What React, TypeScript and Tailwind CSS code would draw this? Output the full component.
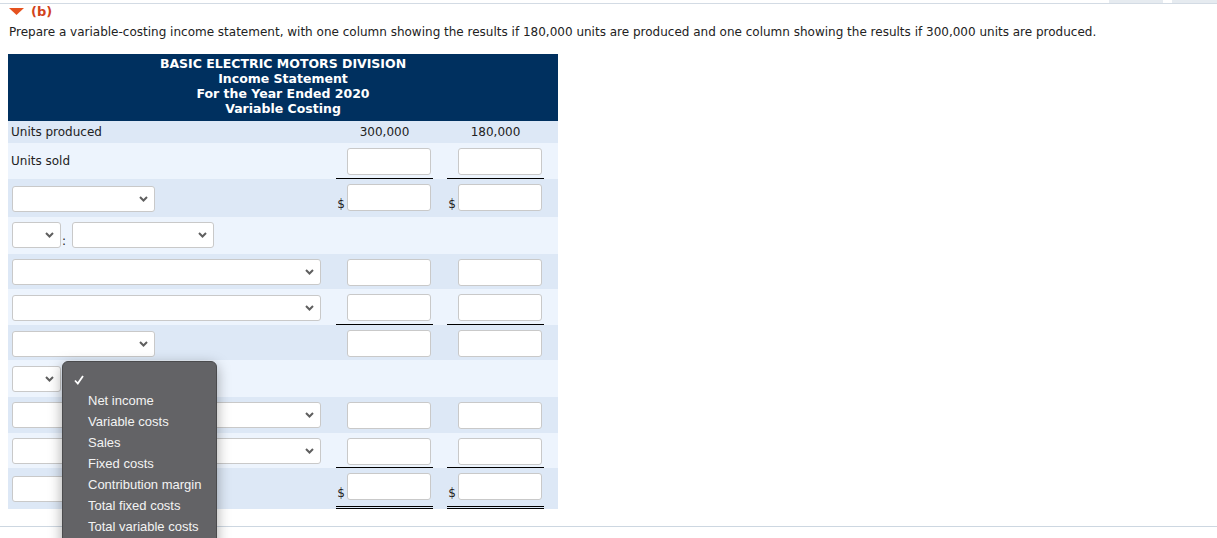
import type { ReactNode } from "react";

const DARK = "bg-[#dde8f6]";
const LIGHT = "bg-[#edf4fd]";

function Chevron() {
  return (
    <svg width="9" height="6" viewBox="0 0 9 6" className="shrink-0">
      <path d="M1 1 L4.5 4.5 L8 1" fill="none" stroke="#5f5f5f" strokeWidth="2" />
    </svg>
  );
}

function Select({ w }: { w: string }) {
  return (
    <div
      className={`${w} h-[26px] bg-white border border-[#c9c9c9] rounded-[3px] flex items-center justify-end pr-[6px]`}
    >
      <Chevron />
    </div>
  );
}

function Amount({ dollar, line }: { dollar?: boolean; line?: "single" | "double" }) {
  const border =
    line === "single"
      ? "border-b border-black"
      : line === "double"
      ? "border-b-[3px] border-double border-black"
      : "";
  return (
    <div className={`h-full flex justify-end items-start pt-[5px] pr-[2px] ${border}`}>
      <div className="flex items-end">
        {dollar && <span className="text-[12px] leading-[14px] mr-[2px] text-[#222]">$</span>}
        <div className="w-[84px] h-[27px] bg-white border border-[#c9c9c9] rounded-[3px]" />
      </div>
    </div>
  );
}

function Row({
  h,
  tone,
  label,
  a,
  b,
}: {
  h: string;
  tone: string;
  label: ReactNode;
  a?: ReactNode;
  b?: ReactNode;
}) {
  return (
    <div className={`grid grid-cols-[328px_97px_14px_97px_14px] ${h} ${tone}`}>
      <div className="pl-[4px] pt-[5px]">{label}</div>
      <div>{a}</div>
      <div />
      <div>{b}</div>
      <div />
    </div>
  );
}

function PairSelects() {
  return (
    <div className="flex items-end">
      <Select w="w-[49px]" />
      <span className="w-[11px] pl-[1px] leading-[14px]">:</span>
      <Select w="w-[142px]" />
    </div>
  );
}

const options = [
  "Net income",
  "Variable costs",
  "Sales",
  "Fixed costs",
  "Contribution margin",
  "Total fixed costs",
  "Total variable costs",
];

export default function App() {
  return (
    <div
      className="relative w-[1217px] h-[538px] overflow-hidden bg-white text-[#222]"
      style={{ fontFamily: '"DejaVu Sans", Verdana, sans-serif' }}
    >
      {/* top tab strip */}
      <div className="relative h-[4px] border-b border-[#d3dbe4]">
        <div className="absolute left-[1109px] top-0 w-[54px] h-[3px] bg-[#e6ebf0]" />
        <div className="absolute left-[1172px] top-0 w-[45px] h-[3px] bg-[#e6ebf0]" />
      </div>

      <div className="flex items-center gap-[7px] pl-[9px] pt-[1px] h-[14px]">
        <svg width="15" height="7" viewBox="0 0 15 7">
          <path d="M0 0 H15 L7.5 7 Z" fill="#e5521f" />
        </svg>
        <span className="text-[13px] font-bold text-[#d2431c] leading-none">(b)</span>
      </div>

      <p className="pl-[9px] pt-[6px] text-[12px] leading-[16px] text-[#222]">
        Prepare a variable-costing income statement, with one column showing the results if 180,000
        units are produced and one column showing the results if 300,000 units are produced.
      </p>

      <div className="ml-[8px] mt-[14px] w-[550px] text-[12px]">
        <div className="h-[67px] bg-[#00305f] text-white font-bold text-center text-[12.5px] leading-[15px] pt-[2px]">
          <div>BASIC ELECTRIC MOTORS DIVISION</div>
          <div>Income Statement</div>
          <div>For the Year Ended 2020</div>
          <div>Variable Costing</div>
        </div>

        <div className={`grid grid-cols-[328px_97px_14px_97px_14px] h-[22px] ${DARK} items-center`}>
          <div className="pl-[3px]">Units produced</div>
          <div className="text-center">300,000</div>
          <div />
          <div className="text-center">180,000</div>
          <div />
        </div>

        <Row
          h="h-[36px]"
          tone={LIGHT}
          label={<div className="leading-[27px] -ml-[1px]">Units sold</div>}
          a={<Amount line="single" />}
          b={<Amount line="single" />}
        />
        <Row
          h="h-[38px]"
          tone={DARK}
          label={<div className="pt-[2px]"><Select w="w-[143px]" /></div>}
          a={<Amount dollar />}
          b={<Amount dollar />}
        />
        <Row h="h-[37px]" tone={LIGHT} label={<PairSelects />} />
        <Row h="h-[35px]" tone={DARK} label={<Select w="w-[309px]" />} a={<Amount />} b={<Amount />} />
        <Row
          h="h-[36px]"
          tone={LIGHT}
          label={<div className="pt-[1px]"><Select w="w-[309px]" /></div>}
          a={<Amount line="single" />}
          b={<Amount line="single" />}
        />
        <Row
          h="h-[35px]"
          tone={DARK}
          label={<div className="pt-[1px]"><Select w="w-[143px]" /></div>}
          a={<Amount />}
          b={<Amount />}
        />
        <Row h="h-[37px]" tone={LIGHT} label={<div className="pt-[1px]"><PairSelects /></div>} />
        <Row h="h-[36px]" tone={DARK} label={<Select w="w-[309px]" />} a={<Amount />} b={<Amount />} />
        <Row
          h="h-[35px]"
          tone={LIGHT}
          label={<Select w="w-[309px]" />}
          a={<Amount line="single" />}
          b={<Amount line="single" />}
        />
        <Row
          h="h-[41px]"
          tone={DARK}
          label={<div className="pt-[3px]"><Select w="w-[143px]" /></div>}
          a={<Amount dollar line="double" />}
          b={<Amount dollar line="double" />}
        />
      </div>

      <div className="mt-[17px] border-t border-[#cdd7e1]" />

      {/* open native select menu */}
      <div
        className="absolute left-[62px] top-[361px] w-[155px] h-[190px] bg-[#636366] border border-[#4b4b4d] rounded-[6px] shadow-[0_4px_14px_rgba(0,0,0,0.35)] pt-[7px] text-[13px] text-[#f3f3f3]"
        style={{ fontFamily: '"Liberation Sans", Arial, sans-serif' }}
      >
        <div className="h-[21px] flex items-center pl-[11px]">
          <svg width="10" height="10" viewBox="0 0 10 10">
            <path d="M1 5.5 L3.8 8.5 L9 1" fill="none" stroke="#ffffff" strokeWidth="1.8" />
          </svg>
        </div>
        {options.map((o) => (
          <div key={o} className="h-[21px] flex items-center pl-[25px]">
            {o}
          </div>
        ))}
      </div>
    </div>
  );
}
